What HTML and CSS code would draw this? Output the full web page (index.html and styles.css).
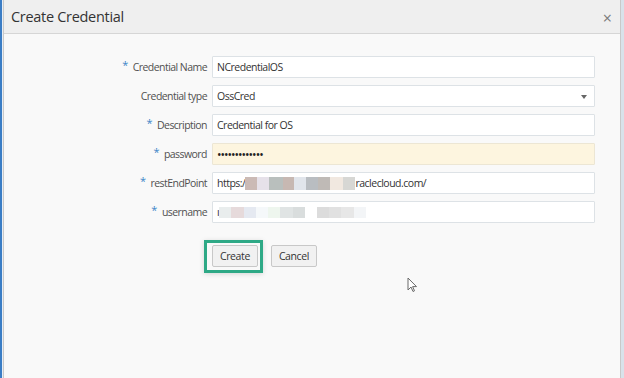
FILE: index.html
```html
<!DOCTYPE html>
<html lang="en">

<head>
    <meta charset="UTF-8">
    <title>Create Credential</title>
    <link rel="stylesheet" href="styles.css">
</head>

<body>

    <div class="app">
        <div class="dialog">
            <div class="dialog-header">
                <span class="dialog-title">Create Credential</span>
                <span class="close">&times;</span>
            </div>

            <div class="form">
                <label class="label"><span class="req">*</span>Credential Name</label>
                <div class="field">NCredentialOS</div>

                <label class="label">Credential type</label>
                <div class="field select">OssCred<span class="arrow"></span></div>

                <label class="label"><span class="req">*</span>Description</label>
                <div class="field">Credential for OS</div>

                <label class="label"><span class="req">*</span>password</label>
                <div class="field pwd">&bull;&bull;&bull;&bull;&bull;&bull;&bull;&bull;&bull;&bull;&bull;&bull;&bull;</div>

                <label class="label"><span class="req">*</span>restEndPoint</label>
                <div class="field">https:/<span class="blur">
                    <i style="background:#cbbab5"></i><i style="background:#e6e1e9"></i><i style="background:#b9bfbd;width:14px"></i><i style="background:#c7b8b2;width:11px"></i><i style="background:#e1e5eb"></i><i style="background:#b9bdc1"></i><i style="background:#bfbab6"></i><i style="background:#f1e8e0;width:13px"></i><i style="background:#d7d7d4"></i>
                </span>raclecloud.com/</div>

                <label class="label"><span class="req">*</span>username</label>
                <div class="field">ı<span class="blur light">
                    <i style="background:#e9eded"></i><i style="background:#e6dadb;width:13px"></i><i style="background:#e5e9f1"></i><i style="background:#f5f8fa"></i><i style="background:#eef6ee"></i><i style="background:#e0e4e4;width:13px"></i><i style="background:#d9dddd"></i><i style="background:#fff"></i><i style="background:#dcdcdc"></i><i style="background:#e1e1e1"></i><i style="background:#e7e7e7;width:13px"></i><i style="background:#f3f5f7"></i>
                </span></div>

                <div></div>
                <div class="actions">
                    <span class="focus-ring"><button class="btn">Create</button></span>
                    <button class="btn">Cancel</button>
                </div>
            </div>

            <svg class="pointer" width="11" height="16" viewBox="0 0 11 16">
                <path d="M1 1 L1 13 L4 10 L6 14.5 L7.5 13.8 L5.6 9.6 L9.5 9.6 Z" fill="#fff" stroke="#6a6a6a" stroke-width="1"/>
            </svg>
        </div>
    </div>

</body>

</html>
```

FILE: styles.css
```css
body {
    margin: 0;
    font-family: "Open Sans", "Noto Sans", sans-serif;
    background: #d9e2ea;
}

.app {
    height: 378px;
    width: 621px;
    border-left: 2px solid #3b7dc5;
    padding-left: 1px;
    background: #e8eef4;
    box-sizing: border-box;
}

.dialog {
    position: relative;
    height: 100%;
    background: #f9f9f9;
    border-left: 1px solid #c9c9c9;
    border-right: 1px solid #c9c9c9;
}

.dialog-header {
    display: flex;
    align-items: center;
    justify-content: space-between;
    height: 33px;
    padding: 0 8px 0 7px;
    background: #efefef;
    border-bottom: 1px solid #d6d6d6;
}

.dialog-title {
    font-size: 14.5px;
    color: #333;
    letter-spacing: -0.3px;
}

.close {
    font-size: 16px;
    color: #7a7a7a;
    margin-top: 2px;
}

.form {
    display: grid;
    grid-template-columns: 203px 383px;
    grid-auto-rows: 22px;
    column-gap: 5px;
    row-gap: 7px;
    padding-top: 22px;
}

.label {
    display: flex;
    align-items: center;
    justify-content: flex-end;
    font-size: 10.5px;
    letter-spacing: -0.55px;
    color: #505050;
}

.req {
    color: #3d86c8;
    font-size: 11px;
    margin-right: 5px;
    position: relative;
    top: -3px;
}

.field {
    display: flex;
    align-items: center;
    position: relative;
    box-sizing: border-box;
    padding-left: 4px;
    background: #fff;
    border: 1px solid #dde2e6;
    border-radius: 1px;
    font-size: 10.5px;
    letter-spacing: -0.5px;
    color: #333;
}

.pwd {
    background: #fdf5df;
    border-color: #ece6d4;
    font-size: 12px;
    letter-spacing: -1px;
    color: #222;
}

.arrow {
    position: absolute;
    right: 7px;
    top: 9px;
    border-left: 3.5px solid transparent;
    border-right: 3.5px solid transparent;
    border-top: 4px solid #666;
}

.blur {
    display: flex;
    height: 13px;
    filter: blur(0.4px);
}

.blur i {
    display: block;
    width: 12px;
}

.light {
    height: 11px;
}

.actions {
    display: flex;
    align-items: center;
    gap: 8px;
    margin-top: 10px;
    margin-left: -8px;
    height: 32px;
}

.focus-ring {
    display: flex;
    padding: 2px 2px 3px 5px;
    border: 3px solid #2ea986;
    box-shadow: 0 1px 5px rgba(0, 0, 0, 0.15);
}

.btn {
    height: 22px;
    padding: 0 7px;
    font-family: inherit;
    font-size: 10.5px;
    letter-spacing: -0.4px;
    color: #333;
    background: #f1f1f1;
    border: 1px solid #c8c8c8;
    border-radius: 2px;
    cursor: pointer;
}

.pointer {
    position: absolute;
    left: 403px;
    top: 277px;
}
```
